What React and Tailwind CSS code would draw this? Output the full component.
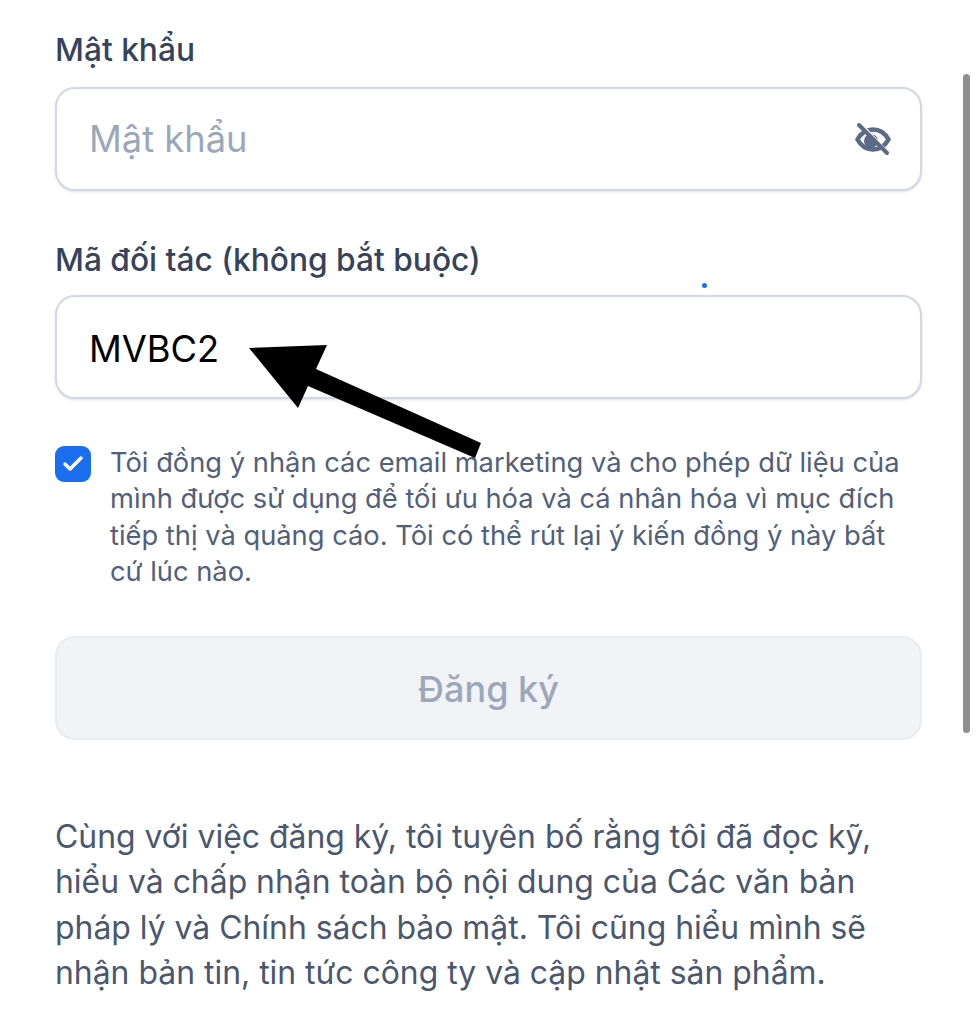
import { Check } from "lucide-react";

function EyeOff() {
  return (
    <svg width="36" height="34" viewBox="0 0 36 34" fill="none" className="shrink-0">
      <path
        d="M2.500 17.500C6 11 11.500 7.500 18 7.500S30 11 33.500 17.500C30 24 24.500 27.500 18 27.500S6 24 2.500 17.500Z"
        stroke="#5b6b85"
        strokeWidth="4.500"
      />
      <circle cx="16" cy="19" r="7" fill="#5b6b85" />
      <path d="M6 2L32 30" stroke="#ffffff" strokeWidth="3" />
      <path d="M4 3L32 31" stroke="#5b6b85" strokeWidth="4" strokeLinecap="round" />
    </svg>
  );
}

function Arrow() {
  return (
    <svg className="absolute left-[245px] top-[340px]" width="240" height="125" viewBox="0 0 240 125">
      <polygon points="4,8 82,5 71,29 236,103 230,118 63,46 53,68" fill="#000000" />
    </svg>
  );
}

function App() {
  return (
    <div className="relative h-[1024px] w-[977px] overflow-hidden bg-white font-['Inter',sans-serif]">
      <div className="absolute left-[963px] top-[74px] h-[659px] w-[7px] rounded-full bg-[#8e8e8e]" />
      <div className="absolute left-[702px] top-[283px] size-[5px] rounded-full bg-[#1a6ff0]" />
      <Arrow />

      <div className="flex flex-col pl-[55px] pr-[55px] pt-[29px]">
        <label className="text-[31.700px] leading-[42px] font-medium text-[#36435a]">Mật khẩu</label>
        <div className="mt-[16px] flex h-[104px] items-center justify-between rounded-[20px] border-2 border-[#d3d8e4] bg-white pl-[33px] pr-[29px] shadow-sm">
          <span className="-ml-[1px] text-[36.300px] text-[#9ca8ba]">Mật khẩu</span>
          <EyeOff />
        </div>

        <label className="mt-[48px] text-[31.700px] leading-[42px] font-medium text-[#36435a]">
          Mã đối tác (không bắt buộc)
        </label>
        <div className="mt-[14px] flex h-[104px] items-center rounded-[20px] border-2 border-[#d3d8e4] bg-white pl-[33px] pr-[29px] shadow-sm">
          <span className="-ml-[1px] pt-[5px] text-[36.300px] text-black">MVBC2</span>
        </div>

        <div className="mt-[46px] flex items-start gap-[19px]">
          <div className="mt-[1px] flex size-[36px] shrink-0 items-center justify-center rounded-[9px] bg-[#1a6ff0]">
            <Check size={24} color="#ffffff" strokeWidth={3.5} />
          </div>
          <p className="pr-[15px] text-[27.300px] leading-[36.400px] text-[#52607a]">
            Tôi đồng ý nhận các email marketing và cho phép dữ liệu của mình được sử dụng để tối ưu hóa và cá nhân hóa vì mục đích tiếp thị và quảng cáo. Tôi có thể rút lại ý kiến đồng ý này bất cứ lúc nào.
          </p>
        </div>

        <div className="mt-[45px] flex h-[104px] items-center justify-center rounded-[20px] border-2 border-[#e9ebf0] bg-[#f2f3f7]">
          <span className="pt-[2px] text-[36px] font-medium text-[#9ca8ba]">Đăng ký</span>
        </div>

        <p className="mt-[74px] pr-[10px] text-[31.900px] leading-[45.500px] text-[#4a576e]">
          Cùng với việc đăng ký, tôi tuyên bố rằng tôi đã đọc kỹ, hiểu và chấp nhận toàn bộ nội dung của Các văn bản pháp lý và Chính sách bảo mật. Tôi cũng hiểu mình sẽ nhận bản tin, tin tức công ty và cập nhật sản phẩm.
        </p>
      </div>
    </div>
  );
}

export default App;
